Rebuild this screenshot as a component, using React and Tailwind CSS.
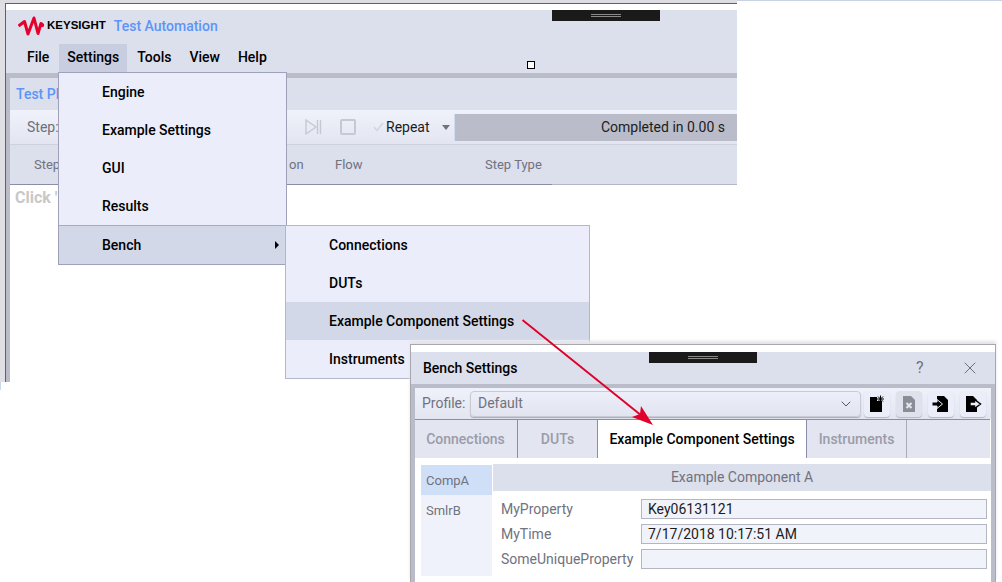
import { ChevronDown, X } from "lucide-react";

const FONT = { fontFamily: "Roboto, sans-serif" };

function Grip() {
  return (
    <div className="flex flex-col gap-px items-center justify-center w-[108px] h-[11px] bg-[#1a1a1a]">
      <div className="w-[30px] h-px bg-[#8a8a8a]" />
      <div className="w-[30px] h-px bg-[#8a8a8a]" />
    </div>
  );
}

function KeysightLogo() {
  return (
    <svg width="26" height="20" viewBox="0 0 26 20" className="shrink-0">
      <path
        d="M0.5 10 L6.5 5.5 L10 18 L16 2 L20 17.5 L23 7.5 L26 10"
        fill="none"
        stroke="#e8002d"
        strokeWidth="3"
        strokeLinejoin="round"
      />
    </svg>
  );
}

function MenuItem({ label, active, arrow, className = "" }) {
  return (
    <div
      className={`flex items-center justify-between h-[38px] text-[14px] font-medium text-black ${
        active ? "bg-[#d3d8e8]" : ""
      } ${className}`}
    >
      <span>{label}</span>
      {arrow && (
        <span className="w-0 h-0 mr-[7px] border-y-[4px] border-y-transparent border-l-[4px] border-l-black" />
      )}
    </div>
  );
}

function FileButton({ children, disabled }) {
  return (
    <div
      className={`flex items-center justify-center w-[26px] h-[26px] rounded-sm shadow-[0_1px_1px_#b4b6c6] ${
        disabled ? "bg-[#dfe1ec]" : "bg-[#ebedf8]"
      }`}
    >
      {children}
    </div>
  );
}

function Field({ label, value }) {
  return (
    <div className="flex items-center h-[20px]">
      <span className="w-[140px] text-[14px] text-[#70727e]">{label}</span>
      <div className="flex-1 h-[20px] flex items-center pl-[6px] bg-[#f1f3fb] border border-[#b4b6c4] text-[14px] text-[#1c1c1c]">
        {value}
      </div>
    </div>
  );
}

function MainWindow() {
  return (
    <div className="absolute left-0 top-0 w-[737px] h-[382px] flex flex-col bg-white border-l-[5px] border-[#e0e0e4]">
      <div className="h-[3px] -ml-[5px] bg-[#dcdce2]" />
      <div className="h-px bg-[#1a74b8]" />
      <div className="flex-1 flex min-h-0">
        <div className="w-px bg-[#1a74b8]" />
        <div className="flex-1 flex flex-col min-w-0">
          <div className="h-[6px] bg-white" />
          <div className="h-[63px] bg-[#dcdfec] flex flex-col">
            <div className="h-[33px] flex items-start pl-[12px] relative">
              <div className="flex items-center h-[32px] gap-[3px]">
                <KeysightLogo />
                <span
                  className="text-[11.5px] font-bold text-black"
                  style={{ fontFamily: "'Liberation Sans', sans-serif" }}
                >
                  KEYSIGHT
                </span>
                <span className="ml-[5px] text-[14px] font-medium text-[#5c95f7]">Test Automation</span>
              </div>
              <div className="absolute left-[546px] top-0">
                <Grip />
              </div>
            </div>
            <div className="flex items-center h-[29px] text-[14px] font-medium text-black">
              <span className="ml-[21px] mr-[10px]">File</span>
              <span className="flex items-center h-[28px] px-[8px] bg-[#c8cee0]">Settings</span>
              <span className="ml-[10px]">Tools</span>
              <span className="ml-[18px]">View</span>
              <span className="ml-[18px]">Help</span>
            </div>
          </div>
          <div className="h-[5px] bg-[#babcc9]" />
          <div className="flex-1 flex min-h-0">
            <div className="w-[4px] bg-[#babcc9]" />
            <div className="flex-1 flex flex-col min-w-0">
              <div className="h-[32px] bg-[#dcdfec] flex items-center pl-[6px] text-[14px] font-medium text-[#5c95f7]">
                Test Plan
              </div>
              <div className="h-[34px] bg-gradient-to-b from-[#eff1fb] to-[#e3e5f0] flex items-center relative">
                <span className="absolute left-[17px] text-[14px] text-[#6e7078]">Step:</span>
                <svg width="18" height="18" viewBox="0 0 18 18" className="absolute left-[294px]" fill="none" stroke="#c6c8d2" strokeWidth="1.4">
                  <path d="M2 2 L12 9 L2 16 Z" />
                  <path d="M13.5 2 V16 M16.5 2 V16" />
                </svg>
                <div className="absolute left-[330px] w-[16px] h-[16px] rounded-[2px] border-2 border-[#c6c8d2]" />
                <svg width="11" height="10" viewBox="0 0 11 10" className="absolute left-[363px]" fill="none" stroke="#d2d4dc" strokeWidth="1.4">
                  <path d="M1 5 L4 8.5 L10 1" />
                </svg>
                <span className="absolute left-[376px] text-[14px] text-[#1c1c1c]">Repeat</span>
                <span className="absolute left-[432px] w-0 h-0 border-x-[4px] border-x-transparent border-t-[5px] border-t-[#70727e]" />
                <div className="absolute left-[444px] right-0 top-[4px] h-[27px] flex items-center justify-end pr-[12px] bg-[#babcc9] border-l border-[#cfdcf4] text-[14px] text-[#1c1c1c]">
                  Completed in 0.00 s
                </div>
              </div>
              <div className="h-px bg-[#cfd1dc]" />
              <div className="h-[40px] bg-[#dcdfec] relative flex items-center text-[13px] text-[#70727e]">
                <span className="absolute left-[24px]">Step</span>
                <span className="absolute left-[279px]">on</span>
                <span className="absolute left-[325px]">Flow</span>
                <span className="absolute left-[475px]">Step Type</span>
                <div className="absolute left-0 bottom-0 w-[542px] h-px bg-[#8a8ca8]" />
                <div className="absolute left-[542px] right-0 bottom-0 h-px bg-[#b4b6c6]" />
              </div>
              <div className="flex-1 pl-[5px] pt-px text-[16px] font-bold text-[#c8c8c8]">Click '</div>
            </div>
          </div>
        </div>
      </div>
    </div>
  );
}

function BenchDialog() {
  return (
    <div className="absolute left-[410px] top-[344px] w-[586px] h-[238px] flex flex-col bg-white border border-b-0 border-[#a8a8ac] shadow-[0_-3px_3px_#e4e4e6]">
      <div className="h-[7px] bg-white" />
      <div className="h-[32px] bg-[#dcdfec] relative flex items-center pl-[12px] text-[14px] font-medium text-black">
        Bench Settings
        <div className="absolute left-[238px] top-0">
          <Grip />
        </div>
        <span className="absolute left-[505px] text-[16px] font-normal text-[#70727e]">?</span>
        <X className="absolute left-[549px] top-[6px]" size={20} strokeWidth={1} color="#55575f" />
      </div>
      <div className="h-[4px] bg-[#babcc9]" />
      <div className="flex-1 flex min-h-0">
        <div className="w-[4px] bg-[#babcc9]" />
        <div className="flex-1 flex flex-col min-w-0 bg-white">
          <div className="h-[31px] bg-gradient-to-b from-[#eff1fb] to-[#e3e5f0] flex items-center pl-[7px] gap-[6px] text-[14px] text-[#70727e]">
            <span className="w-[42px]">Profile:</span>
            <div className="w-[391px] h-[26px] flex items-center justify-between pl-[7px] pr-[6px] rounded-sm bg-gradient-to-b from-[#eceef9] to-[#e2e4f0] border border-[#c8cad6] shadow-[0_1px_1px_#a8aaba]">
              Default
              <ChevronDown size={16} strokeWidth={1.5} color="#55575f" />
            </div>
            <div className="flex gap-[6px] ml-[-3px]">
              <FileButton>
                <svg width="16" height="18" viewBox="0 0 16 18">
                  <path d="M1 2 H8 V6 H13 V17 H1 Z" fill="#000" />
                  <path d="M11.5 0.5 V7.5 M8 4 H15 M9 1.5 L14 6.5 M14 1.5 L9 6.5" stroke="#000" strokeWidth="1" />
                </svg>
              </FileButton>
              <FileButton disabled>
                <svg width="14" height="18" viewBox="0 0 14 18">
                  <path d="M1 1 H9 L13 5 V17 H1 Z" fill="#8a8c96" />
                  <path d="M4.5 8 L9.5 13 M9.5 8 L4.5 13" stroke="#e4e6ee" strokeWidth="2" />
                </svg>
              </FileButton>
              <FileButton>
                <svg width="18" height="18" viewBox="0 0 18 18">
                  <path d="M5 1 H12 L16 5 V17 H5 Z" fill="#000" />
                  <path d="M0 7 H5 V4.5 L10.5 9 L5 13.5 V11 H0 Z" fill="#000" stroke="#ebedf8" strokeWidth="1" />
                </svg>
              </FileButton>
              <FileButton>
                <svg width="18" height="18" viewBox="0 0 18 18">
                  <path d="M2 1 H9 L13 5 V17 H2 Z" fill="#000" />
                  <path d="M6 7 H10.5 V4.5 L16.5 9 L10.5 13.5 V11 H6 Z" fill="#ebedf8" stroke="#000" strokeWidth="1.4" />
                </svg>
              </FileButton>
            </div>
          </div>
          <div className="h-[39px] flex bg-[#e3e5f0] border-t border-[#8a8ca8] text-[14px] font-medium text-[#9a9ca8] mr-[1px]">
            <div className="w-[103px] pr-px flex items-center justify-center border-r border-[#8a8ca8]">Connections</div>
            <div className="w-[80px] flex items-center justify-center border-r border-[#8a8ca8]">DUTs</div>
            <div className="w-[209px] flex items-center justify-center bg-white text-black border-r border-[#8a8ca8]">
              Example Component Settings
            </div>
            <div className="w-[100px] flex items-center justify-center border-r border-[#a8aabc]">Instruments</div>
          </div>
          <div className="flex-1 flex pt-[6px] pl-[6px] min-h-0">
            <div className="w-[71px] h-[111px] mt-px bg-[#f0f2fb] text-[13px] text-[#70727e]">
              <div className="h-[30px] flex items-center pl-[5px] pt-[2px] bg-[#cfdff8]">CompA</div>
              <div className="h-[30px] flex items-center pl-[5px] pt-[2px]">SmlrB</div>
            </div>
            <div className="flex-1 flex flex-col ml-px">
              <div className="h-[27px] flex items-center justify-center bg-[#dcdfec] text-[14px] text-[#70727e]">
                Example Component A
              </div>
              <div className="flex flex-col gap-[5px] pt-[8px] pl-[8px] pr-[4px] flex-1">
                <Field label="MyProperty" value="Key06131121" />
                <Field label="MyTime" value="7/17/2018 10:17:51 AM" />
                <Field label="SomeUniqueProperty" value="" />
              </div>
            </div>
          </div>
        </div>
        <div className="w-[4px] bg-[#babcc9]" />
      </div>
    </div>
  );
}

export default function App() {
  return (
    <div className="relative w-[1002px] h-[582px] overflow-hidden bg-white" style={FONT}>
      <div className="absolute inset-x-0 top-0 h-px bg-[#c8d3e4]" />
      <MainWindow />
      <div className="absolute left-0 top-[382px] w-px h-[8px] bg-[#c8d8f0]" />

      {/* resize handle */}
      <div className="absolute left-[527px] top-[61px] w-[8px] h-[8px] bg-white border border-black" />

      {/* settings menu */}
      <div className="absolute left-[58px] top-[72px] w-[229px] h-[193px] bg-[#ebeefa] border border-[#9ea1b8]">
        <MenuItem label="Engine" className="pl-[43px]" />
        <MenuItem label="Example Settings" className="pl-[43px]" />
        <MenuItem label="GUI" className="pl-[43px]" />
        <MenuItem label="Results" className="pl-[43px]" />
        <div className="h-px bg-[#a8abc0]" />
        <MenuItem label="Bench" active arrow className="pl-[43px]" />
      </div>

      {/* bench submenu */}
      <div className="absolute left-[285px] top-[225px] w-[305px] h-[154px] bg-[#ebeefa] border border-[#b4b7ca]">
        <MenuItem label="Connections" className="pl-[43px]" />
        <MenuItem label="DUTs" className="pl-[43px]" />
        <MenuItem label="Example Component Settings" active className="pl-[43px]" />
        <MenuItem label="Instruments" className="pl-[43px]" />
      </div>

      <BenchDialog />

      {/* callout arrow */}
      <svg width="1002" height="582" className="absolute left-0 top-0 pointer-events-none">
        <path d="M522.5 320 L642 416" stroke="#e0002a" strokeWidth="1.9" fill="none" />
        <path d="M653 425 L632 417 L640 414 L641 406 Z" fill="#e0002a" />
      </svg>
    </div>
  );
}
